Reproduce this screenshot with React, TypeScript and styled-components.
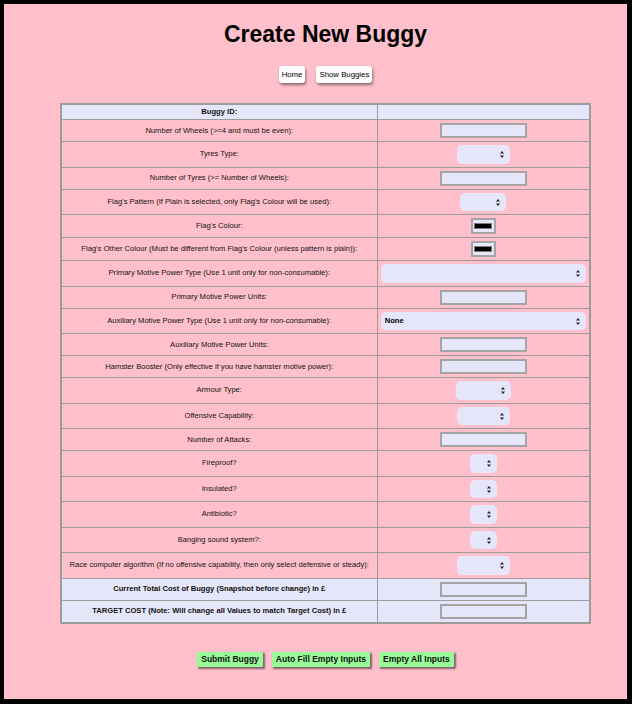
import styled, { createGlobalStyle } from "styled-components";

const GlobalStyle = createGlobalStyle`
  html, body {
    margin: 0;
    padding: 0;
    background: #000000;
  }
  body {
    font-family: "Liberation Sans", Arial, Helvetica, sans-serif;
  }
`;

const Frame = styled.div`
  background: #000000;
  padding: 4px 5px 5px 4px;
`;

const Page = styled.div`
  height: 695px;
  box-sizing: border-box;
  background: #ffc0cb;
  padding: 16px 0 0 20px;
  display: flex;
  flex-direction: column;
  align-items: center;
`;

const Title = styled.h1`
  margin: 0;
  font-size: 23px;
  line-height: 28px;
  font-weight: bold;
  color: #000000;
`;

const Nav = styled.div`
  margin-top: 18px;
  display: flex;
  gap: 11px;
`;

const NavButton = styled.button`
  height: 17px;
  padding: 0 3px;
  border: none;
  border-radius: 3px;
  background: #ffffff;
  font-family: inherit;
  font-size: 7.8px;
  color: #000000;
  box-shadow: 1px 2px 3px rgba(0, 0, 0, 0.45);
`;

const Table = styled.table`
  margin-top: 20px;
  width: 529px;
  table-layout: fixed;
  border-collapse: collapse;
  border: 2px solid #9c9c9c;
`;

const Row = styled.tr<{ $lavender?: boolean }>`
  background: ${(p) => (p.$lavender ? "#e6e6fa" : "transparent")};
`;

const Cell = styled.td<{ $bold?: boolean }>`
  border: 1px solid #9c9c9c;
  padding: 3px 2px;
  text-align: center;
  vertical-align: middle;
  white-space: nowrap;
  font-size: 7.6px;
  line-height: 8px;
  font-weight: ${(p) => (p.$bold ? "bold" : "normal")};
  color: #111111;
`;

const TextInput = styled.input`
  display: block;
  margin: 0 auto;
  width: 87px;
  height: 15px;
  box-sizing: border-box;
  padding: 0 3px;
  border: 2px solid #a4a4a4;
  background: #e6e6fa;
  font-size: 8px;
`;

const SelectBox = styled.div<{ $width: number }>`
  position: relative;
  margin: 0 auto;
  width: ${(p) => p.$width}px;
  height: 18.5px;
`;

const Select = styled.select`
  appearance: none;
  -webkit-appearance: none;
  width: 100%;
  height: 100%;
  border: none;
  border-radius: 5px;
  background: #e6e6fa;
  padding: 0 12px 0 4px;
  font-family: inherit;
  font-size: 7.6px;
  font-weight: bold;
  color: #000000;
`;

const Arrow = styled.svg`
  position: absolute;
  right: 6px;
  top: 6px;
  pointer-events: none;
`;

const ColourInput = styled.input`
  display: block;
  margin: 0 auto;
  width: 25px;
  height: 16px;
  box-sizing: border-box;
  padding: 3px 1.5px;
  border: 2px solid #a4a4a4;
  background: #e6e6fa;
  &::-webkit-color-swatch-wrapper {
    padding: 0;
  }
  &::-webkit-color-swatch {
    border: 1px solid #7a7a7a;
    border-radius: 0;
  }
`;

const Actions = styled.div`
  margin-top: 28px;
  display: flex;
  gap: 9px;
`;

const ActionButton = styled.button`
  height: 15px;
  padding: 0 4px;
  border: none;
  border-radius: 1px;
  background: #98fb98;
  font-family: inherit;
  font-size: 8.5px;
  font-weight: bold;
  color: #111111;
  box-shadow: 1.5px 1.5px 2px rgba(0, 0, 0, 0.5);
`;

type Field =
  | { label: string; kind: "text" }
  | { label: string; kind: "colour" }
  | { label: string; kind: "select"; width: number; value?: string };

const fields: Field[] = [
  { label: "Number of Wheels (>=4 and must be even):", kind: "text" },
  { label: "Tyres Type:", kind: "select", width: 53 },
  { label: "Number of Tyres (>= Number of Wheels):", kind: "text" },
  { label: "Flag's Pattern (If Plain is selected, only Flag's Colour will be used):", kind: "select", width: 46 },
  { label: "Flag's Colour:", kind: "colour" },
  { label: "Flag's Other Colour (Must be different from Flag's Colour (unless pattern is plain)):", kind: "colour" },
  { label: "Primary Motive Power Type (Use 1 unit only for non-consumable):", kind: "select", width: 205 },
  { label: "Primary Motive Power Units:", kind: "text" },
  { label: "Auxiliary Motive Power Type (Use 1 unit only for non-consumable):", kind: "select", width: 205, value: "None" },
  { label: "Auxiliary Motive Power Units:", kind: "text" },
  { label: "Hamster Booster (Only effective if you have hamster motive power):", kind: "text" },
  { label: "Armour Type:", kind: "select", width: 55 },
  { label: "Offensive Capability:", kind: "select", width: 53 },
  { label: "Number of Attacks:", kind: "text" },
  { label: "Fireproof?", kind: "select", width: 27 },
  { label: "Insulated?", kind: "select", width: 27 },
  { label: "Antibiotic?", kind: "select", width: 27 },
  { label: "Banging sound system?:", kind: "select", width: 27 },
  { label: "Race computer algorithm (If no offensive capability, then only select defensive or steady):", kind: "select", width: 53 },
];

const ArrowIcon = () => (
  <Arrow width="4" height="7" viewBox="0 0 4 7">
    <path d="M2 0 L4 2.6 L0 2.6 Z M0 4.4 L4 4.4 L2 7 Z" fill="#222" />
  </Arrow>
);

const Control = ({ field }: { field: Field }) => {
  if (field.kind === "text") return <TextInput type="text" />;
  if (field.kind === "colour") return <ColourInput type="color" defaultValue="#000000" />;
  return (
    <SelectBox $width={field.width}>
      <Select defaultValue={field.value ?? ""}>
        <option value="">{""}</option>
        {field.value && <option value={field.value}>{field.value}</option>}
      </Select>
      <ArrowIcon />
    </SelectBox>
  );
};

export default function App() {
  return (
    <>
      <GlobalStyle />
      <Frame>
        <Page>
          <Title>Create New Buggy</Title>
          <Nav>
            <NavButton>Home</NavButton>
            <NavButton>Show Buggies</NavButton>
          </Nav>
          <Table>
            <colgroup>
              <col style={{ width: 316 }} />
              <col style={{ width: 213 }} />
            </colgroup>
            <tbody>
              <Row $lavender>
                <Cell $bold>Buggy ID:</Cell>
                <Cell />
              </Row>
              {fields.map((f) => (
                <Row key={f.label}>
                  <Cell>{f.label}</Cell>
                  <Cell>
                    <Control field={f} />
                  </Cell>
                </Row>
              ))}
              <Row $lavender>
                <Cell $bold>Current Total Cost of Buggy (Snapshot before change) in £</Cell>
                <Cell>
                  <TextInput type="text" />
                </Cell>
              </Row>
              <Row $lavender>
                <Cell $bold>TARGET COST (Note: Will change all Values to match Target Cost) in £</Cell>
                <Cell>
                  <TextInput type="text" />
                </Cell>
              </Row>
            </tbody>
          </Table>
          <Actions>
            <ActionButton>Submit Buggy</ActionButton>
            <ActionButton>Auto Fill Empty Inputs</ActionButton>
            <ActionButton>Empty All Inputs</ActionButton>
          </Actions>
        </Page>
      </Frame>
    </>
  );
}
